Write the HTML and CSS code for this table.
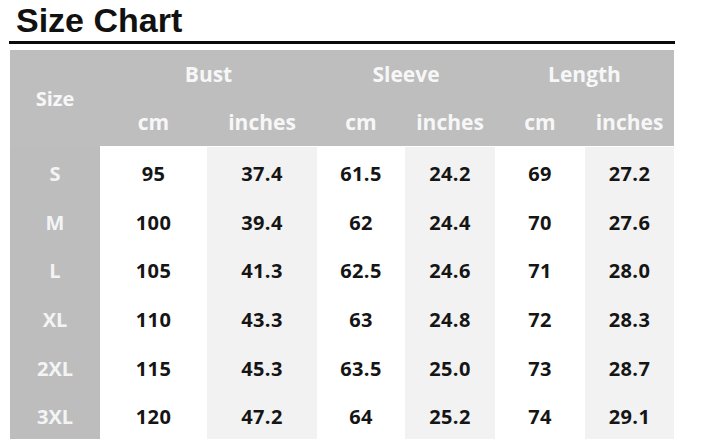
FILE: index.html
```html
<!DOCTYPE html>
<html>
<head>
<meta charset="utf-8">
<link rel="stylesheet" href="styles.css">
</head>
<body>
<div class="page">
  <h1 class="title">Size Chart</h1>
  <div class="rule"></div>
  <div class="chart">
    <div class="hd size-h">Size</div>
    <div class="hd grp g1">Bust</div>
    <div class="hd grp g2">Sleeve</div>
    <div class="hd grp g3">Length</div>
    <div class="hd sub">cm</div><div class="hd sub">inches</div>
    <div class="hd sub">cm</div><div class="hd sub">inches</div>
    <div class="hd sub">cm</div><div class="hd sub">inches</div>

    <div class="sz">S</div><div class="c">95</div><div class="c alt">37.4</div><div class="c">61.5</div><div class="c alt">24.2</div><div class="c">69</div><div class="c alt">27.2</div>
    <div class="sz">M</div><div class="c">100</div><div class="c alt">39.4</div><div class="c">62</div><div class="c alt">24.4</div><div class="c">70</div><div class="c alt">27.6</div>
    <div class="sz">L</div><div class="c">105</div><div class="c alt">41.3</div><div class="c">62.5</div><div class="c alt">24.6</div><div class="c">71</div><div class="c alt">28.0</div>
    <div class="sz">XL</div><div class="c">110</div><div class="c alt">43.3</div><div class="c">63</div><div class="c alt">24.8</div><div class="c">72</div><div class="c alt">28.3</div>
    <div class="sz">2XL</div><div class="c">115</div><div class="c alt">45.3</div><div class="c">63.5</div><div class="c alt">25.0</div><div class="c">73</div><div class="c alt">28.7</div>
    <div class="sz">3XL</div><div class="c">120</div><div class="c alt">47.2</div><div class="c">64</div><div class="c alt">25.2</div><div class="c">74</div><div class="c alt">29.1</div>
  </div>
</div>
</body>
</html>
```
FILE: styles.css
```css
html, body {
  margin: 0;
  padding: 0;
  background: #ffffff;
}
.page {
  width: 703px;
  height: 444px;
  padding-top: 1px;
  box-sizing: border-box;
  overflow: hidden;
}
.title {
  margin: 0 0 0 16px;
  font-family: "Liberation Sans", Arial, sans-serif;
  font-weight: bold;
  font-size: 34px;
  line-height: 38px;
  color: #111111;
}
.rule {
  margin: 2px 0 0 9px;
  width: 666px;
  height: 3px;
  background: #0a0a0a;
}
.chart {
  margin: 6px 0 0 10px;
  width: 664px;
  display: grid;
  grid-template-columns: 90px 107px 110px 88px 90px 90px 89px;
  grid-template-rows: 47px 50px repeat(6, 48.7px);
  font-family: "Open Sans", "Noto Sans", sans-serif;
  font-weight: bold;
}
.hd {
  background: #bebebf;
  color: #f7f7f7;
  display: flex;
  align-items: center;
  justify-content: center;
}
.size-h {
  grid-row: 1 / 3;
  font-size: 20px;
}
.grp {
  font-size: 21px;
}
.g1 { grid-column: 2 / 4; }
.g2 { grid-column: 4 / 6; }
.g3 { grid-column: 6 / 8; }
.sub {
  font-size: 21px;
  border-bottom: 1px solid #ffffff;
}
.sz {
  background: #bdbdbe;
  color: #f4f4f4;
  font-size: 20px;
  padding-top: 4px;
  display: flex;
  align-items: center;
  justify-content: center;
}
.c {
  background: #ffffff;
  color: #151515;
  font-size: 20px;
  letter-spacing: 0.4px;
  padding-top: 4px;
  display: flex;
  align-items: center;
  justify-content: center;
}
.c.alt {
  background: #f2f2f3;
}
```
